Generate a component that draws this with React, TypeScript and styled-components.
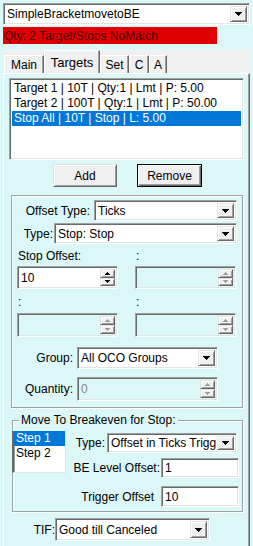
import * as React from 'react';
import styled, { createGlobalStyle, css } from 'styled-components';

const CYAN = '#dcf7f7';

const GlobalStyle = createGlobalStyle`
  html, body {
    margin: 0;
    padding: 0;
    background: ${CYAN};
  }
  body {
    font-family: 'Liberation Sans', Arial, sans-serif;
    font-size: 12px;
    color: #000;
  }
  * {
    box-sizing: border-box;
  }
`;

// classic win32 3d edges
const sunken = css`
  border: 1px solid;
  border-color: #a0a0a0 #fff #fff #a0a0a0;
  box-shadow: inset 1px 1px #696969, inset -1px -1px #e3e3e3;
`;

const raised = css`
  border: 1px solid;
  border-color: #e3e3e3 #696969 #696969 #e3e3e3;
  box-shadow: inset 1px 1px #fff, inset -1px -1px #a0a0a0;
`;

const etched = css`
  border: 1px solid #a0a0a0;
  box-shadow: inset 1px 1px #fff, 1px 1px #fff;
`;

const Window = styled.div`
  width: 253px;
  height: 546px;
  overflow: hidden;
  padding: 3px 3px 0 3px;
  display: flex;
  flex-direction: column;
`;

/* ---------- combo box ---------- */

const ComboFrame = styled.div<{ $w: number; $h: number }>`
  ${sunken}
  flex: none;
  width: ${({ $w }) => $w}px;
  height: ${({ $h }) => $h}px;
  background: #fff;
  display: flex;
  padding: 2px;
`;

const ComboText = styled.div`
  flex: 1;
  display: flex;
  align-items: center;
  padding-left: 1px;
  white-space: nowrap;
  overflow: hidden;
`;

const DropButton = styled.div`
  ${raised}
  flex: none;
  width: 17px;
  background: #f0f0f0;
  display: flex;
  align-items: center;
  justify-content: center;
`;

const DownArrow = () => (
  <svg width="7" height="4" viewBox="0 0 7 4" shapeRendering="crispEdges">
    <polygon points="0,0 7,0 3.5,4" fill="#000" />
  </svg>
);

type ComboProps = { w: number; h: number; value: string };

const Combo = ({ w, h, value }: ComboProps) => (
  <ComboFrame $w={w} $h={h}>
    <ComboText>{value}</ComboText>
    <DropButton>
      <DownArrow />
    </DropButton>
  </ComboFrame>
);

/* ---------- spin edit ---------- */

const SpinFrame = styled.div<{ $w: number; $h: number; $disabled?: boolean }>`
  ${sunken}
  flex: none;
  width: ${({ $w }) => $w}px;
  height: ${({ $h }) => $h}px;
  background: ${({ $disabled }) => ($disabled ? CYAN : '#fff')};
  color: ${({ $disabled }) => ($disabled ? '#8a8a8a' : '#000')};
  display: flex;
  padding: 2px;
`;

const SpinButtons = styled.div`
  flex: none;
  width: 15px;
  display: flex;
  flex-direction: column;
`;

const SpinButton = styled.div`
  ${raised}
  flex: 1;
  background: #f0f0f0;
  display: flex;
  align-items: center;
  justify-content: center;
`;

const SpinArrow = ({ up, disabled }: { up?: boolean; disabled?: boolean }) => (
  <svg width="5" height="3" viewBox="0 0 5 3" shapeRendering="crispEdges">
    <polygon
      points={up ? '0,3 5,3 2.5,0' : '0,0 5,0 2.5,3'}
      fill={disabled ? '#a0a0a0' : '#000'}
    />
  </svg>
);

type SpinProps = { w: number; h: number; value?: string; disabled?: boolean };

const Spin = ({ w, h, value, disabled }: SpinProps) => (
  <SpinFrame $w={w} $h={h} $disabled={disabled}>
    <ComboText>{value}</ComboText>
    <SpinButtons>
      <SpinButton>
        <SpinArrow up disabled={disabled} />
      </SpinButton>
      <SpinButton>
        <SpinArrow disabled={disabled} />
      </SpinButton>
    </SpinButtons>
  </SpinFrame>
);

const Edit = styled.div<{ $w: number; $h: number }>`
  ${sunken}
  flex: none;
  width: ${({ $w }) => $w}px;
  height: ${({ $h }) => $h}px;
  background: #fff;
  display: flex;
  align-items: center;
  padding-left: 3px;
`;

/* ---------- header ---------- */

const StatusBar = styled.div`
  width: 214px;
  height: 17px;
  margin-top: 2px;
  background: #e00000;
  color: #4a0000;
  display: flex;
  align-items: center;
  padding-left: 1px;
`;

/* ---------- tabs ---------- */

const TabStrip = styled.div`
  margin-top: 6px;
  width: 247px;
  height: 23px;
  background: #f0f0f0;
  display: flex;
  align-items: flex-end;
  padding-left: 1px;
`;

const Tab = styled.div<{ $w: number; $active?: boolean }>`
  width: ${({ $w }) => $w}px;
  height: ${({ $active }) => ($active ? 23 : 18)}px;
  background: #f0f0f0;
  border-top: 1px solid #fff;
  border-left: 1px solid #fff;
  border-right: 1px solid #696969;
  box-shadow: inset -1px 0 #a0a0a0;
  display: flex;
  justify-content: center;
  align-items: ${({ $active }) => ($active ? 'flex-start' : 'center')};
  padding-top: ${({ $active }) => ($active ? 4 : 0)}px;
  font-size: ${({ $active }) => ($active ? 13 : 12)}px;
`;

const TabPanel = styled.div`
  flex: 1;
  width: 247px;
  border-top: 1px solid #fff;
  border-left: 1px solid #fff;
  border-right: 1px solid #696969;
  box-shadow: inset -1px 0 #a0a0a0;
  padding: 4px 3px 0 5px;
  display: flex;
  flex-direction: column;
`;

/* ---------- list box ---------- */

const ListBox = styled.div<{ $w: number; $h: number }>`
  ${sunken}
  flex: none;
  width: ${({ $w }) => $w}px;
  height: ${({ $h }) => $h}px;
  background: #fff;
  padding: 2px;
`;

const ListItem = styled.div<{ $selected?: boolean }>`
  height: 15px;
  line-height: 15px;
  padding-left: 2px;
  white-space: nowrap;
  background: ${({ $selected }) => ($selected ? '#0078d7' : 'transparent')};
  color: ${({ $selected }) => ($selected ? '#fff' : '#000')};
`;

/* ---------- buttons ---------- */

const ButtonRow = styled.div`
  display: flex;
  gap: 20px;
  margin-top: 4px;
  padding-left: 44px;
`;

const PushButton = styled.div<{ $default?: boolean }>`
  width: ${({ $default }) => ($default ? 65 : 64)}px;
  height: 23px;
  background: #f0f0f0;
  display: flex;
  align-items: center;
  justify-content: center;
  ${({ $default }) =>
    $default
      ? css`
          border: 1px solid #000;
          box-shadow: inset 1px 1px #fff, inset -1px -1px #696969,
            inset -2px -2px #a0a0a0;
        `
      : raised}
`;

/* ---------- settings frame ---------- */

const Frame = styled.div`
  ${etched}
  margin: 8px 0 0 2px;
  width: 232px;
  height: 213px;
  display: flex;
  flex-direction: column;
`;

const Row = styled.div<{ $top: number; $right: number; $gap: number }>`
  display: flex;
  align-items: center;
  justify-content: flex-end;
  margin-top: ${({ $top }) => $top}px;
  padding-right: ${({ $right }) => $right}px;
  gap: ${({ $gap }) => $gap}px;
`;

const Label = styled.span`
  white-space: nowrap;
`;

const TwoCols = styled.div<{ $top: number }>`
  display: grid;
  grid-template-columns: 101px 101px;
  column-gap: 17px;
  padding-left: 5px;
  margin-top: ${({ $top }) => $top}px;
`;

const ColLabel = styled.div`
  height: 15px;
  line-height: 15px;
  padding-left: 1px;
`;

/* ---------- breakeven group ---------- */

const GroupBox = styled.div`
  ${etched}
  position: relative;
  margin: 12px 0 0 3px;
  width: 231px;
  height: 92px;
  display: flex;
  padding-top: 10px;
`;

const GroupTitle = styled.span`
  position: absolute;
  top: -8px;
  left: 6px;
  padding: 0 2px;
  background: ${CYAN};
  line-height: 15px;
`;

const StepList = styled.div`
  flex: none;
  width: 54px;
  height: 42px;
  margin-left: -1px;
  background: #fff;
  border-left: 2px solid #696969;
  border-right: 1px solid #e3e3e3;
  border-bottom: 1px solid #e3e3e3;
  box-shadow: inset 1px 0 #a0a0a0;
`;

const StepFields = styled.div`
  flex: 1;
  display: flex;
  flex-direction: column;
`;

const TifRow = styled.div`
  display: flex;
  align-items: center;
  margin-top: 6px;
`;

const TifLabel = styled.span`
  flex: none;
  width: 46px;
  text-align: right;
  white-space: nowrap;
`;

const targets = [
  'Target 1 | 10T | Qty:1 | Lmt | P: 5.00',
  'Target 2 | 100T | Qty:1 | Lmt | P: 50.00',
  'Stop All | 10T | Stop | L: 5.00',
];

export default function App() {
  const [selected, setSelected] = React.useState(2);
  const [step, setStep] = React.useState(0);

  return (
    <>
      <GlobalStyle />
      <Window>
        <Combo w={247} h={22} value="SimpleBracketmovetoBE" />
        <StatusBar>Qty: 2 Target/Stops NoMatch</StatusBar>

        <TabStrip>
          <Tab $w={40}>Main</Tab>
          <Tab $w={56} $active>
            Targets
          </Tab>
          <Tab $w={29}>Set</Tab>
          <Tab $w={20}>C</Tab>
          <Tab $w={18}>A</Tab>
        </TabStrip>

        <TabPanel>
          <ListBox $w={235} $h={82}>
            {targets.map((t, i) => (
              <ListItem key={t} $selected={i === selected} onClick={() => setSelected(i)}>
                {t}
              </ListItem>
            ))}
          </ListBox>

          <ButtonRow>
            <PushButton>Add</PushButton>
            <PushButton $default>Remove</PushButton>
          </ButtonRow>

          <Frame>
            <Row $top={4} $right={5} $gap={4}>
              <Label>Offset Type:</Label>
              <Combo w={143} h={21} value="Ticks" />
            </Row>
            <Row $top={2} $right={5} $gap={1}>
              <Label>Type:</Label>
              <Combo w={183} h={21} value="Stop: Stop" />
            </Row>

            <TwoCols $top={5}>
              <ColLabel>Stop Offset:</ColLabel>
              <ColLabel>:</ColLabel>
            </TwoCols>
            <TwoCols $top={2}>
              <Spin w={101} h={23} value="10" />
              <Spin w={101} h={23} disabled />
            </TwoCols>

            <TwoCols $top={6}>
              <ColLabel>:</ColLabel>
              <ColLabel>:</ColLabel>
            </TwoCols>
            <TwoCols $top={3}>
              <Spin w={101} h={24} disabled />
              <Spin w={101} h={24} disabled />
            </TwoCols>

            <Row $top={10} $right={24} $gap={4}>
              <Label>Group:</Label>
              <Combo w={141} h={22} value="All OCO Groups" />
            </Row>
            <Row $top={8} $right={24} $gap={4}>
              <Label>Quantity:</Label>
              <Spin w={141} h={24} value="0" disabled />
            </Row>
          </Frame>

          <GroupBox>
            <GroupTitle>Move To Breakeven for Stop:</GroupTitle>
            <StepList>
              {['Step 1', 'Step 2'].map((s, i) => (
                <ListItem key={s} $selected={i === step} onClick={() => setStep(i)}>
                  {s}
                </ListItem>
              ))}
            </StepList>
            <StepFields>
              <Row $top={2} $right={5} $gap={2}>
                <Label>Type:</Label>
                <Combo w={130} h={20} value="Offset in Ticks Trigg" />
              </Row>
              <Row $top={5} $right={3} $gap={1}>
                <Label>BE Level Offset:</Label>
                <Edit $w={78} $h={20}>1</Edit>
              </Row>
              <Row $top={8} $right={3} $gap={7}>
                <Label>Trigger Offset</Label>
                <Edit $w={78} $h={21}>10</Edit>
              </Row>
            </StepFields>
          </GroupBox>

          <TifRow>
            <TifLabel>TIF:</TifLabel>
            <Combo w={155} h={23} value="Good till Canceled" />
          </TifRow>
        </TabPanel>
      </Window>
    </>
  );
}
